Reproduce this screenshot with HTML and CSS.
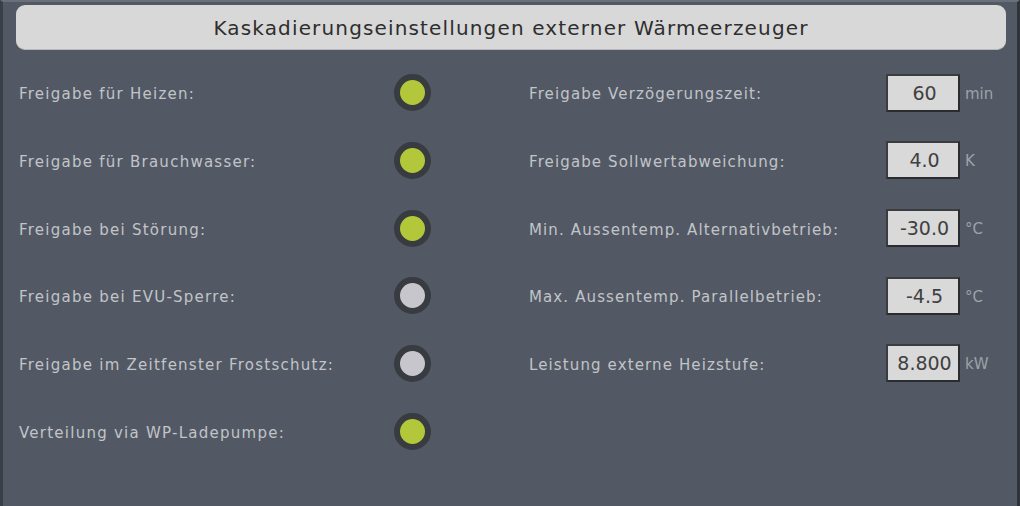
FILE: index.html
```html
<!DOCTYPE html>
<html lang="de">
<head>
<meta charset="utf-8">
<link rel="stylesheet" href="styles.css">
</head>
<body>
<div class="screen">
  <div class="header">Kaskadierungseinstellungen externer Wärmeerzeuger</div>
  <div class="grid">
    <div class="label">Freigabe für Heizen:</div>
    <div class="led on"></div>
    <div class="spacer"></div>
    <div class="label right">Freigabe Verzögerungszeit:</div>
    <div class="box">60</div>
    <div class="unit">min</div>

    <div class="label">Freigabe für Brauchwasser:</div>
    <div class="led on"></div>
    <div class="spacer"></div>
    <div class="label right">Freigabe Sollwertabweichung:</div>
    <div class="box">4.0</div>
    <div class="unit">K</div>

    <div class="label">Freigabe bei Störung:</div>
    <div class="led on"></div>
    <div class="spacer"></div>
    <div class="label right">Min. Aussentemp. Alternativbetrieb:</div>
    <div class="box">-30.0</div>
    <div class="unit">°C</div>

    <div class="label">Freigabe bei EVU-Sperre:</div>
    <div class="led off"></div>
    <div class="spacer"></div>
    <div class="label right">Max. Aussentemp. Parallelbetrieb:</div>
    <div class="box">-4.5</div>
    <div class="unit">°C</div>

    <div class="label">Freigabe im Zeitfenster Frostschutz:</div>
    <div class="led off"></div>
    <div class="spacer"></div>
    <div class="label right">Leistung externe Heizstufe:</div>
    <div class="box">8.800</div>
    <div class="unit">kW</div>

    <div class="label">Verteilung via WP-Ladepumpe:</div>
    <div class="led on"></div>
    <div class="spacer"></div>
    <div class="label right"></div>
    <div></div>
    <div></div>
  </div>
</div>
</body>
</html>
```

FILE: styles.css
```css
html, body {
  margin: 0;
  padding: 0;
  width: 1020px;
  height: 506px;
  overflow: hidden;
  background: #525965;
  font-family: "DejaVu Sans", "Liberation Sans", sans-serif;
}

.screen {
  box-sizing: border-box;
  width: 1020px;
  height: 506px;
  border-left: 3px solid #3a3f47;
  border-right: 3px solid #2f333a;
  border-top: 2px solid #6a7079;
  background: #525965;
  padding-top: 3px;
}

.header {
  margin: 0 11px 0 13px;
  height: 45px;
  box-sizing: border-box;
  background: #d8d8d8;
  border-radius: 9px;
  border-bottom: 1px solid #b8babd;
  color: #2e2e2e;
  font-size: 20px;
  display: flex;
  align-items: center;
  justify-content: center;
  letter-spacing: 1.15px;
  padding-top: 1px;
}

.grid {
  display: grid;
  grid-template-columns: 375px 37px 98px 357px 74px auto;
  grid-template-rows: 67px 68px 68px 67px 68px 68px;
  align-items: center;
  padding: 9px 0 0 16px;
}

.label {
  color: #c2c4c8;
  font-size: 15px;
  letter-spacing: 1.25px;
  padding-top: 3px;
}

.label.right {
  letter-spacing: 1.12px;
}

.led {
  box-sizing: border-box;
  width: 37px;
  height: 37px;
  border-radius: 50%;
  border: 6px solid #383b40;
}
.led.on { background: #b3c73a; }
.led.off { background: #c6c6cc; }

.box {
  box-sizing: border-box;
  height: 38px;
  background: #d9d9d9;
  border: 2px solid #2a2c30;
  border-top-color: #3a3c40;
  border-left-color: #3a3c40;
  color: #404040;
  font-size: 19px;
  display: flex;
  align-items: center;
  justify-content: center;
  padding-left: 3px;
}

.unit {
  color: #9ea2a8;
  font-size: 15px;
  padding-left: 5px;
  padding-top: 2px;
}
```
